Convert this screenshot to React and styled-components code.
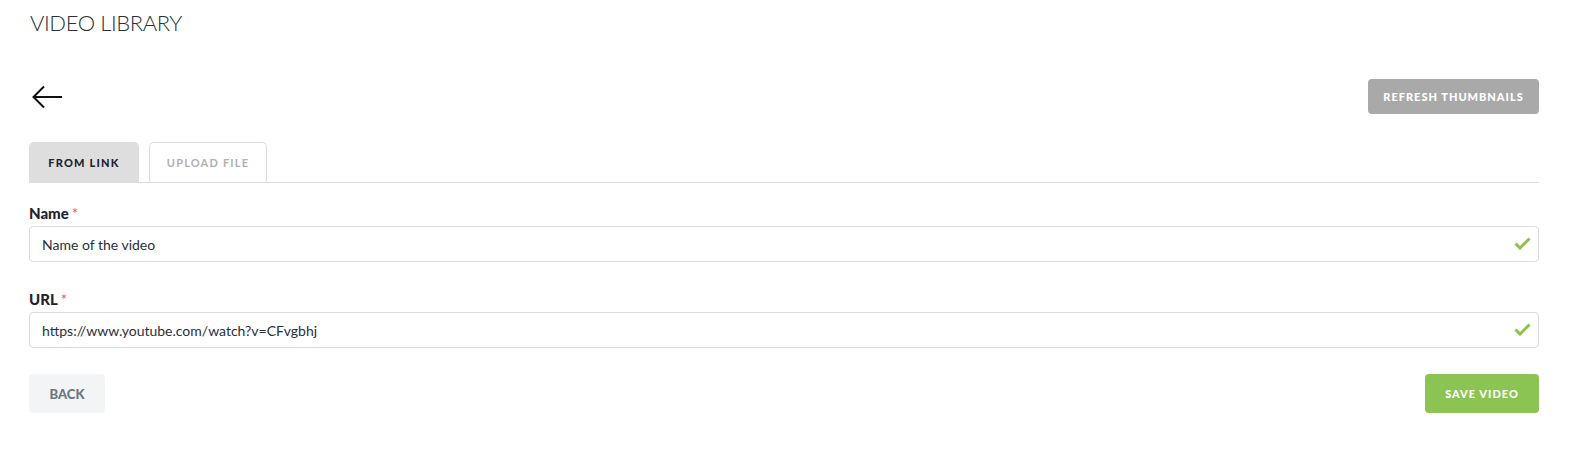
import React from "react";
import styled, { createGlobalStyle } from "styled-components";

const Global = createGlobalStyle`
  html, body { margin: 0; padding: 0; background: #fff; }
  body { font-family: "Lato", "Open Sans", sans-serif; color: #222; }
  * { box-sizing: border-box; }
`;

const Page = styled.div`
  padding: 0 35px 0 29px;
`;

const Title = styled.h1`
  margin: 9px 0 0 1px;
  font-size: 22px;
  line-height: 28px;
  font-weight: 300;
  color: #2b2f3a;
  letter-spacing: -0.4px;
`;

const Toolbar = styled.div`
  display: flex;
  align-items: center;
  justify-content: space-between;
  margin-top: 42px;
  height: 35px;
`;

const IconButton = styled.button`
  border: 0;
  background: none;
  padding: 0;
  margin-left: 3px;
  display: flex;
  cursor: pointer;
`;

const Button = styled.button`
  border: 0;
  border-radius: 4px;
  font-family: "Lato", "Open Sans", sans-serif;
  font-weight: 900;
  text-transform: uppercase;
  cursor: pointer;
  height: ${(p) => p.$h || 39}px;
  width: ${(p) => p.$w}px;
  background: ${(p) => p.$bg};
  color: ${(p) => p.$color};
  font-size: ${(p) => p.$size || 11}px;
  letter-spacing: ${(p) => p.$ls ?? 1}px;
`;

const Tabs = styled.div`
  display: flex;
  gap: 10px;
  margin-top: 28px;
  border-bottom: 1px solid #dcdcdc;
`;

const Tab = styled.div`
  width: ${(p) => p.$w}px;
  height: 40px;
  display: flex;
  align-items: center;
  justify-content: center;
  border-radius: 5px 5px 0 0;
  font-size: 11px;
  letter-spacing: 1.2px;
  background: ${(p) => (p.$active ? "#dedede" : "#fff")};
  color: ${(p) => (p.$active ? "#1d2330" : "#b0b0b0")};
  border: 1px solid ${(p) => (p.$active ? "#dedede" : "#dcdcdc")};
  border-bottom: 0;
  font-weight: ${(p) => (p.$active ? 900 : 700)};
`;

const Field = styled.div`
  margin-top: ${(p) => p.$mt}px;
`;

const Label = styled.label`
  display: block;
  font-size: 15px;
  line-height: 20px;
  font-weight: 900;
  color: #1f2430;
  margin-bottom: 3px;
`;

const Star = styled.span`
  color: #e8505b;
  font-weight: 400;
  margin-left: 3px;
`;

const InputWrap = styled.div`
  position: relative;
`;

const Input = styled.input`
  width: 100%;
  height: 36px;
  border: 1px solid #dcdcdc;
  border-radius: 4px;
  padding: 0 40px 0 12px;
  font-family: "Lato", "Open Sans", sans-serif;
  font-size: 14px;
  color: #2a2f3a;
  outline: none;
`;

const Check = styled.svg`
  position: absolute;
  right: 8px;
  top: 11px;
`;

const Footer = styled.div`
  display: flex;
  justify-content: space-between;
  margin-top: 26px;
`;

function Arrow() {
  return (
    <svg width="30" height="24" viewBox="0 0 30 24" fill="none" stroke="#111" strokeWidth="2">
      <path d="M1.5 12 H30" />
      <path d="M12 1.5 L1.5 12 L12 22.5" />
    </svg>
  );
}

function CheckIcon() {
  return (
    <Check width="17" height="13" viewBox="0 0 17 13" fill="none" stroke="#8bc34a" strokeWidth="3">
      <path d="M1.5 6.5 L6 11 L15.5 1.5" />
    </Check>
  );
}

export default function App() {
  return (
    <>
      <Global />
      <Page>
        <Title>VIDEO LIBRARY</Title>
        <Toolbar>
          <IconButton aria-label="Back">
            <Arrow />
          </IconButton>
          <Button $w={171} $h={35} $bg="#a9a9a9" $color="#fff">
            Refresh Thumbnails
          </Button>
        </Toolbar>
        <Tabs>
          <Tab $w={110} $active>FROM LINK</Tab>
          <Tab $w={118}>UPLOAD FILE</Tab>
        </Tabs>
        <Field $mt={20}>
          <Label>
            Name<Star>*</Star>
          </Label>
          <InputWrap>
            <Input defaultValue="Name of the video" />
            <CheckIcon />
          </InputWrap>
        </Field>
        <Field $mt={27}>
          <Label>
            URL<Star>*</Star>
          </Label>
          <InputWrap>
            <Input defaultValue="https://www.youtube.com/watch?v=CFvgbhj" />
            <CheckIcon />
          </InputWrap>
        </Field>
        <Footer>
          <Button $w={76} $bg="#f3f4f6" $color="#6b7680" $size={13} $ls={0}>
            Back
          </Button>
          <Button $w={114} $bg="#8cc453" $color="#fff">
            Save Video
          </Button>
        </Footer>
      </Page>
    </>
  );
}
